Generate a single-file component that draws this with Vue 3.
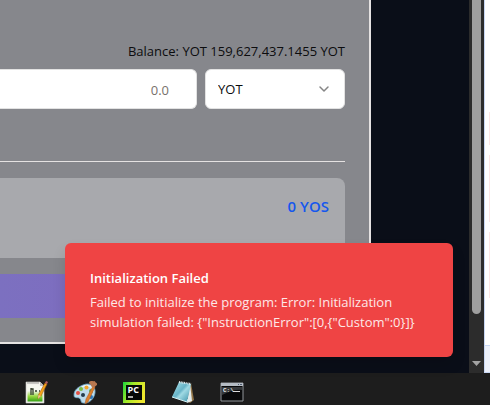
<script setup>
import { ref } from 'vue'

const amount = ref('')
const token = ref('YOT')
const tokens = ['YOT', 'YOS']
</script>

<template>
  <div class="desktop">
    <div class="browser">
      <main class="page">
        <section class="card">
          <label class="balance" for="amount">Balance: YOT 159,627,437.1455 YOT</label>
          <div class="fields">
            <input id="amount" v-model="amount" class="amount" type="text" inputmode="decimal" placeholder="0.0" />
            <div class="picker">
              <select v-model="token" class="token" aria-label="Token">
                <option v-for="t in tokens" :key="t">{{ t }}</option>
              </select>
              <svg class="chevron" viewBox="0 0 16 16" aria-hidden="true">
                <path d="M4 6l4 4 4-4" fill="none" stroke="#858585" stroke-width="1.5" stroke-linecap="round" stroke-linejoin="round" />
              </svg>
            </div>
          </div>
          <hr class="rule" />
          <div class="reward">0 YOS</div>
          <button class="submit" type="button" aria-label="Submit"></button>
        </section>
        <div class="toast" role="alert">
          <strong class="toast-title">Initialization Failed</strong>
          <p class="toast-text">Failed to initialize the program: Error: Initialization simulation failed: {"InstructionError":[0,{"Custom":0}]}</p>
        </div>
      </main>
      <div class="scrollbar" aria-hidden="true">
        <div class="thumb"></div>
        <svg class="arrow" viewBox="0 0 9 5"><path d="M0 0h9L4.500 5z" fill="#a3a3a3" /></svg>
      </div>
      <aside class="side" aria-hidden="true">
        <div class="side-list"><i></i><i></i><i></i></div>
        <div class="side-foot"></div>
      </aside>
    </div>

    <nav class="taskbar" aria-label="Taskbar">
      <button class="app" type="button" aria-label="Notepad++">
        <svg viewBox="0 0 24 24">
          <defs>
            <linearGradient id="np" x1="0" y1="0" x2="0" y2="1">
              <stop offset="0.35" stop-color="#f5f8f0" /><stop offset="0.7" stop-color="#92d53c" /><stop offset="1" stop-color="#349f16" />
            </linearGradient>
          </defs>
          <path d="M2 2h14l4 4v17H2z" fill="#f4f4ef" stroke="#c6c8c0" stroke-width="0.600" />
          <path d="M3.500 5H17l1.500 2v14.500h-15z" fill="url(#np)" />
          <path d="M4 2v2m2-2v2m2-2v2m2-2v2m2-2v2m2-2v2" stroke="#777" stroke-width="0.700" />
          <path d="M16 2l4 4h-4z" fill="#bbb" />
          <path d="M7 8v7M7 9h2v6M11 11h2m2 0h1" fill="none" stroke="#303b29" stroke-width="1.300" />
          <path d="M21 3l2 1-6 12-3 3 .4-4z" fill="#f4a51b" stroke="#a55b14" stroke-width="0.600" />
          <path d="M21 3l1-2 2 1-1 2z" fill="#b86062" />
          <path d="M14.400 15l2.600 1-3 3z" fill="#e3c79b" />
        </svg>
      </button>
      <button class="app" type="button" aria-label="Paint">
        <svg viewBox="0 0 24 24">
          <path d="M10 5c7-3 13 1 12 8-1 6-6 11-12 10-3 0-1-4-4-5-2-1-5 1-5-3 0-5 4-8 9-10z" fill="#bddbea" stroke="#6ba4c5" stroke-width="0.800" />
          <path d="M9 7c5-3 11-1 11 5" fill="none" stroke="#e8f6fa" stroke-width="1.500" />
          <circle cx="5" cy="13" r="2" fill="#e45144" />
          <circle cx="8" cy="9" r="2" fill="#7bbd44" />
          <circle cx="13.500" cy="7.500" r="2" fill="#f2a52c" />
          <circle cx="18" cy="11" r="2" fill="#56aa4b" />
          <circle cx="10" cy="15" r="2" fill="#253c4b" />
          <circle cx="18" cy="17" r="2" fill="#2a78bd" />
          <path d="M20 6l2 1-7 15-3 2 1-5z" fill="#dc802d" stroke="#a75825" stroke-width="0.500" />
          <path d="M16 2c2-2 4 0 6-1 0 2 3 2 2 4-1 1-2 1-3 3l-3-2c1-2-2-1-2-4z" fill="#b87850" />
        </svg>
      </button>
      <button class="app" type="button" aria-label="PyCharm">
        <svg viewBox="0 0 24 24">
          <defs>
            <linearGradient id="pc" x1="0" y1="0" x2="1" y2="0.400">
              <stop offset="0" stop-color="#18d43d" /><stop offset="0.45" stop-color="#a5e928" /><stop offset="1" stop-color="#eee72e" />
            </linearGradient>
          </defs>
          <path d="M1 2h22v21H1z" fill="url(#pc)" />
          <path d="M4 5h16v15H4z" fill="#050805" />
          <text x="5.500" y="13" class="pc-label">PC</text>
          <path d="M6 17h5" stroke="#e3e5df" stroke-width="1.500" />
        </svg>
      </button>
      <button class="app" type="button" aria-label="Notepad">
        <svg viewBox="0 0 24 24">
          <defs>
            <linearGradient id="nb" x1="0" y1="0" x2="1" y2="1">
              <stop offset="0" stop-color="#b3e8ee" /><stop offset="0.45" stop-color="#67b4c8" /><stop offset="0.55" stop-color="#a0dae4" /><stop offset="1" stop-color="#358da6" />
            </linearGradient>
          </defs>
          <path d="M20 3l3 17-4 3-3-2z" fill="#927649" />
          <path d="M19 3l2 18-5 2z" fill="#e3eced" />
          <path d="M8 2l12 2-4 18-15-5z" fill="url(#nb)" />
          <path d="M8 2l12 2" stroke="#e1edf0" stroke-width="2" stroke-dasharray="1 0.700" />
          <path d="M1 17l15 5 1-3" fill="none" stroke="#d4eff3" stroke-width="1" />
        </svg>
      </button>
      <button class="app" type="button" aria-label="Command Prompt">
        <svg viewBox="0 0 24 24">
          <path d="M1 3h22v18H1z" fill="#090a0b" stroke="#92969b" />
          <path d="M1 3h22v3H1z" fill="#b5bcc4" />
          <path d="M18 4.500h1m1 0h2" stroke="#4e5c70" />
          <path d="M2 7h20v3Q14 9 2 15z" fill="#35383b" />
          <text x="3" y="12" class="cmd-label">C:\</text>
          <path d="M13 11.500h7" stroke="#ddd" />
        </svg>
      </button>
    </nav>
  </div>
</template>

<style>
body { margin: 0; }
</style>

<style scoped>
* { box-sizing: border-box; }
.desktop {
  display: flex;
  flex-direction: column;
  min-height: 100vh;
  background: #1d1d1d;
  color: #0c0c0e;
  font-family: "Open Sans", "Noto Sans", sans-serif;
  font-size: 13px;
  line-height: 20px;
}
.browser { display: flex; flex: 1; }
.page {
  position: relative;
  flex: 1;
  min-width: 0;
  padding: 0 98px 29px 0;
  background: #0a0e18;
}
.card {
  display: flex;
  flex-direction: column;
  padding: 41px 24px 24px 0;
  border: solid #e5e2e2;
  border-width: 0 2px 2px 0;
  background: #86878c;
}
.balance { align-self: flex-end; }
.fields { display: flex; gap: 8px; margin-top: 8px; }
.amount, .token {
  height: 40px;
  border: 1px solid #e2e2e2;
  border-radius: 6px;
  background: #fff;
  font: inherit;
}
.amount {
  flex: 1;
  min-width: 0;
  padding: 2px 27px 0 12px;
  border-left: 0;
  border-radius: 0 6px 6px 0;
  text-align: right;
}
.amount::placeholder { color: #78716c; opacity: 1; }
.picker { display: grid; width: 140px; }
.token {
  grid-area: 1 / 1;
  width: 100%;
  padding: 0 12px;
  appearance: none;
  color: #0c0c0e;
}
.chevron {
  grid-area: 1 / 1;
  place-self: center end;
  width: 16px;
  height: 16px;
  margin-right: 13px;
  pointer-events: none;
}
.rule {
  width: 100%;
  height: 1px;
  margin: 52px 0 16px;
  border: 0;
  background: #e5e2e2;
}
.reward {
  height: 80px;
  padding: 18px 16px;
  border-radius: 0 8px 0 0;
  background: #a8a9ad;
  color: #1557ee;
  font-size: 15px;
  font-weight: 600;
  text-align: right;
}
.submit {
  height: 44px;
  margin-top: 16px;
  border: 0;
  border-radius: 0 6px 6px 0;
  background: linear-gradient(90deg, #7c70c0, #8264bd);
}
.toast {
  position: absolute;
  right: 16px;
  bottom: 16px;
  width: 388px;
  padding: 25px 25px 25px 25px;
  border-radius: 6px;
  background: #ef4444;
  box-shadow: 0 8px 14px rgba(0, 0, 0, 0.12);
  color: #fff;
}
.toast-title { display: block; font-weight: 600; }
.toast-text { margin: 4px 0 0; color: #fde8e8; }
.scrollbar {
  display: flex;
  flex-direction: column;
  align-items: center;
  width: 15px;
  padding-bottom: 7px;
  background: #2c2c2c;
}
.thumb { flex: 1; width: 9px; border-radius: 0 0 5px 5px; background: #9f9f9f; }
.arrow { width: 9px; height: 5px; margin-top: 47px; }
.side {
  display: flex;
  flex-direction: column;
  width: 6px;
  border-left: 1px solid #c9d8f5;
  background: #fff;
}
.side-list {
  display: flex;
  flex: 1;
  flex-direction: column;
  align-items: flex-end;
  gap: 10px;
  padding: 112px 0 47px;
}
.side-list i { flex: 2; width: 1px; background: #fbe5e5; }
.side-list i:first-child { flex: 1; }
.side-foot { height: 28px; border: solid #c9d8f5; border-width: 1px 0; background: #edf1fb; }
.taskbar {
  display: flex;
  gap: 25px;
  height: 32px;
  padding: 7px 0 0 24px;
  background: #1d1d1d;
}
.app { width: 24px; height: 24px; padding: 0; border: 0; background: none; }
.app svg { display: block; width: 24px; height: 24px; }
.pc-label { fill: #fff; font: 700 9px "Open Sans", sans-serif; }
.cmd-label { fill: #eee; font: 700 6px "Liberation Mono", monospace; }
</style>
